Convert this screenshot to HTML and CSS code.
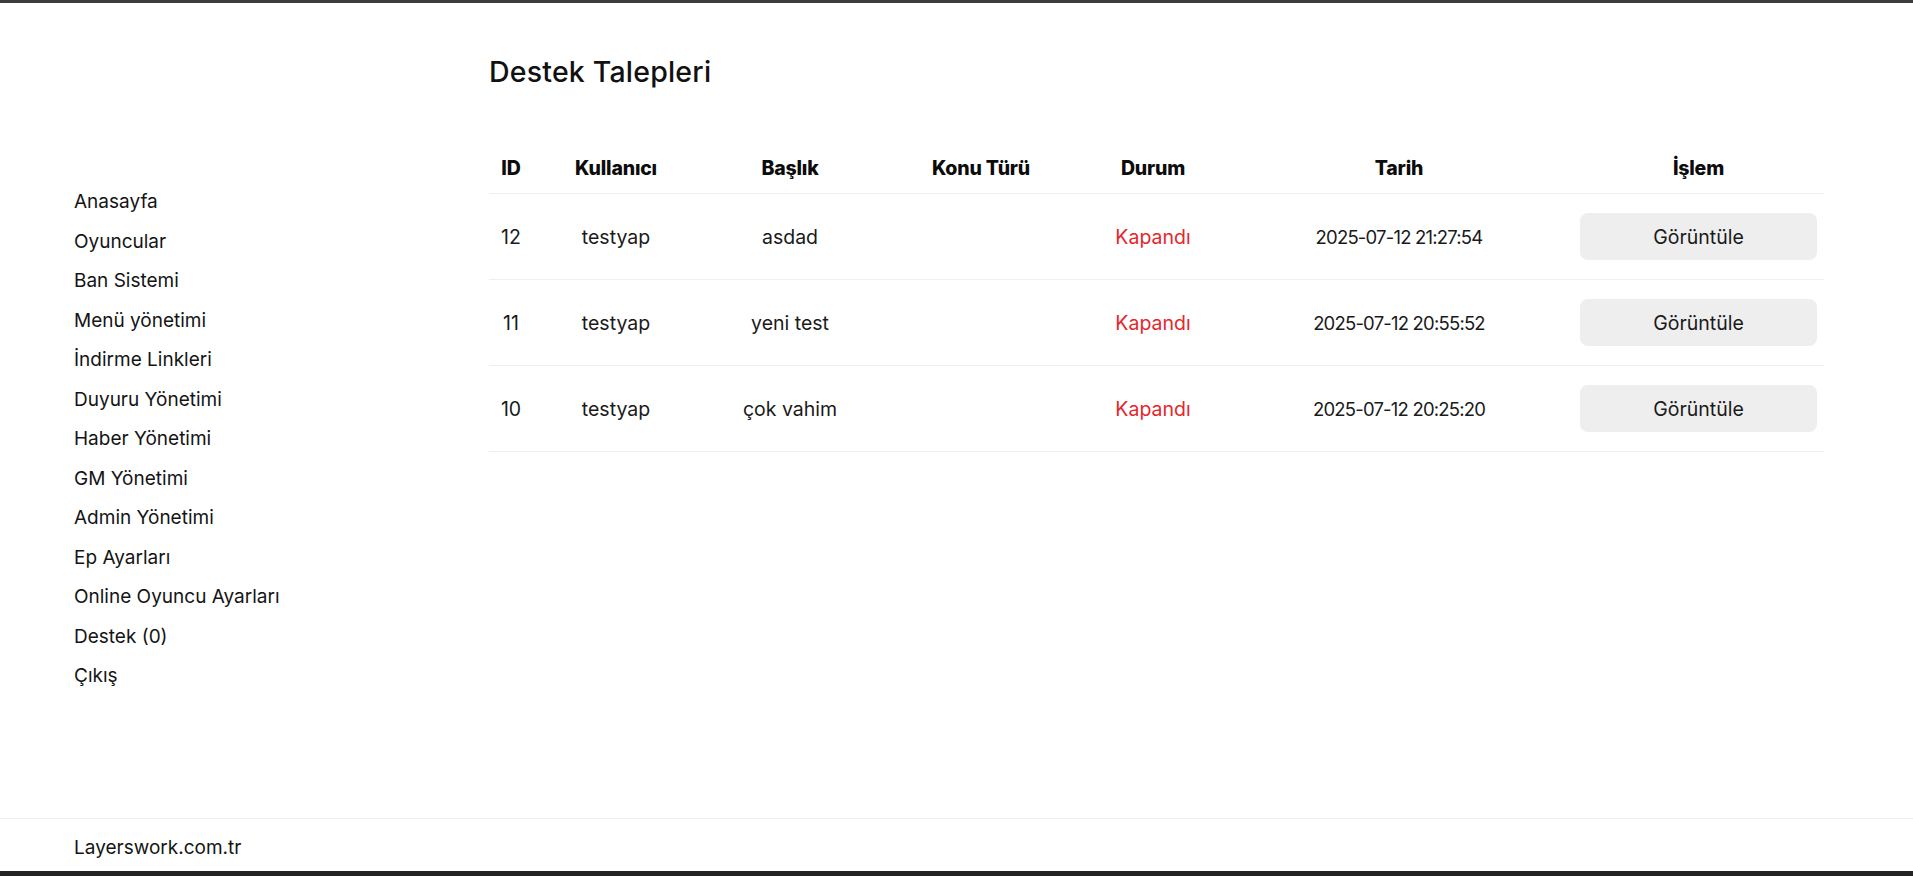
FILE: index.html
```html
<!DOCTYPE html>
<html lang="tr">
<head>
<meta charset="utf-8">
<title>Destek Talepleri</title>
<link rel="stylesheet" href="styles.css">
</head>
<body>
<div class="layout">
  <nav class="sidebar">
    <ul class="menu">
      <li><a href="#">Anasayfa</a></li>
      <li><a href="#">Oyuncular</a></li>
      <li><a href="#">Ban Sistemi</a></li>
      <li><a href="#">Menü yönetimi</a></li>
      <li><a href="#">İndirme Linkleri</a></li>
      <li><a href="#">Duyuru Yönetimi</a></li>
      <li><a href="#">Haber Yönetimi</a></li>
      <li><a href="#">GM Yönetimi</a></li>
      <li><a href="#">Admin Yönetimi</a></li>
      <li><a href="#">Ep Ayarları</a></li>
      <li><a href="#">Online Oyuncu Ayarları</a></li>
      <li><a href="#">Destek (0)</a></li>
      <li><a href="#">Çıkış</a></li>
    </ul>
  </nav>
  <main class="content">
    <h1 class="page-title">Destek Talepleri</h1>
    <table class="tickets">
      <colgroup>
        <col class="c-id"><col class="c-user"><col class="c-title"><col class="c-type"><col class="c-status"><col class="c-date"><col>
      </colgroup>
      <thead>
        <tr>
          <th>ID</th><th>Kullanıcı</th><th>Başlık</th><th>Konu Türü</th><th>Durum</th><th>Tarih</th><th>İşlem</th>
        </tr>
      </thead>
      <tbody>
        <tr>
          <td>12</td><td>testyap</td><td>asdad</td><td></td><td class="status">Kapandı</td><td class="date">2025-07-12 21:27:54</td>
          <td><button class="btn">Görüntüle</button></td>
        </tr>
        <tr>
          <td>11</td><td>testyap</td><td>yeni test</td><td></td><td class="status">Kapandı</td><td class="date">2025-07-12 20:55:52</td>
          <td><button class="btn">Görüntüle</button></td>
        </tr>
        <tr>
          <td>10</td><td>testyap</td><td>çok vahim</td><td></td><td class="status">Kapandı</td><td class="date">2025-07-12 20:25:20</td>
          <td><button class="btn">Görüntüle</button></td>
        </tr>
      </tbody>
    </table>
  </main>
</div>
<footer class="footer">Layerswork.com.tr</footer>
</body>
</html>
```
FILE: styles.css
```css
* { box-sizing: border-box; }

html, body { height: 100%; }

body {
  margin: 0;
  min-height: 100vh;
  display: flex;
  flex-direction: column;
  border-top: 3px solid #3c3c3c;
  background: #fff;
  color: #161616;
  font-family: Inter, "Noto Sans", sans-serif;
}

.layout {
  flex: 1;
  display: flex;
}

.sidebar {
  width: 489px;
  flex: none;
  padding: 179px 0 0 74px;
}

.menu {
  list-style: none;
  margin: 0;
  padding: 0;
}

.menu li {
  padding: 9px 0;
  line-height: 21.5px;
  font-size: 19px;
}

.menu a {
  color: #141414;
  text-decoration: none;
}

.content {
  flex: 1;
  padding: 53px 89px 0 0;
}

.page-title {
  margin: 0 0 55px;
  font-size: 28.5px;
  line-height: 32px;
  font-weight: 500;
  color: #111;
  letter-spacing: 0.2px;
}

.tickets {
  width: 100%;
  border-collapse: collapse;
  table-layout: fixed;
  font-size: 19.5px;
}

.c-id { width: 44px; }
.c-user { width: 166px; }
.c-title { width: 182px; }
.c-type { width: 200px; }
.c-status { width: 144px; }
.c-date { width: 348px; }

.tickets th {
  padding: 14px 7px;
  line-height: 22px;
  font-weight: 800;
  font-size: 19.5px;
  color: #0c0c0c;
  text-align: center;
  border-bottom: 1px solid #efefef;
  letter-spacing: -0.2px;
}

.tickets td {
  padding: 19px 7px;
  text-align: center;
  color: #1a1a1a;
  border-bottom: 1px solid #efefef;
  line-height: 22px;
  vertical-align: middle;
}

.tickets .status { color: #e5262b; }

.tickets .date {
  font-size: 18.5px;
  letter-spacing: -0.8px;
}

.btn {
  display: block;
  width: 100%;
  height: 47px;
  border: none;
  border-radius: 8px;
  background: #eeeeee;
  color: #1a1a1a;
  font-family: inherit;
  font-size: 19.5px;
  cursor: pointer;
}

.footer {
  height: 58px;
  padding: 18px 0 0 74px;
  border-top: 1px solid #efefef;
  border-bottom: 5px solid #242424;
  font-size: 19px;
  line-height: 22px;
  color: #141414;
}
```
